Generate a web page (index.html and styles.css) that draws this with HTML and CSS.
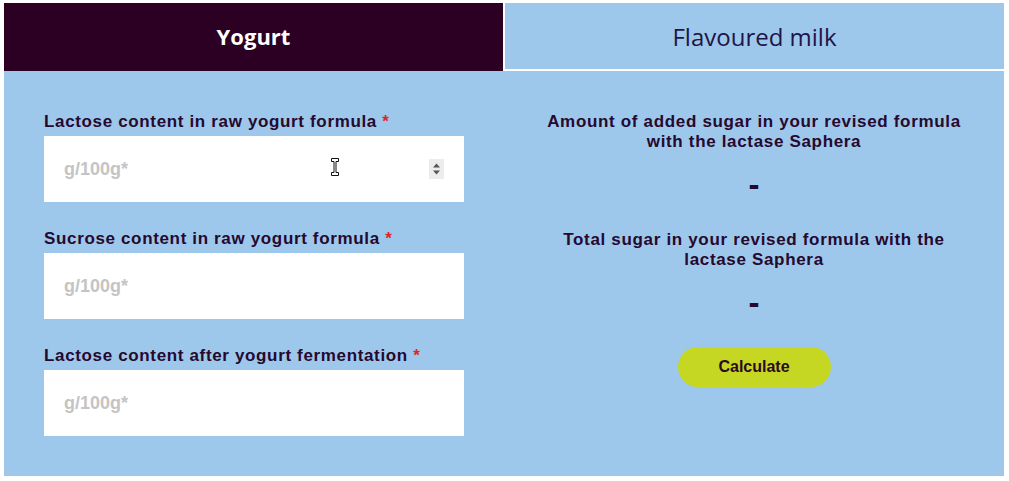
FILE: index.html
```html
<!DOCTYPE html>
<html lang="en">
<head>
<meta charset="utf-8">
<title>Sugar calculator</title>
<link rel="stylesheet" href="styles.css">
</head>
<body>
<div class="calc">
  <div class="tabs">
    <div class="tab tab-active">Yogurt</div>
    <div class="tab">Flavoured milk</div>
  </div>
  <div class="panel">
    <div class="col form">
      <div class="field">
        <label class="label">Lactose content in raw yogurt formula <span class="req">*</span></label>
        <div class="input-wrap">
          <input class="input" type="text" placeholder="g/100g*">
          <svg class="cursor" width="8" height="18" viewBox="0 0 8 18"><path d="M0.5 0.5H7.5V3.5H5V14.5H7.5V17.5H0.5V14.5H3V3.5H0.5Z" fill="#fff" stroke="#111" stroke-width="1"/></svg>
          <span class="spinner"><svg width="15" height="20" viewBox="0 0 15 20"><path d="M4 8.5h7L7.5 4.5z M4 11.5h7L7.5 15.5z" fill="#555"/></svg></span>
        </div>
      </div>
      <div class="field">
        <label class="label">Sucrose content in raw yogurt formula <span class="req">*</span></label>
        <div class="input-wrap"><input class="input" type="text" placeholder="g/100g*"></div>
      </div>
      <div class="field">
        <label class="label">Lactose content after yogurt fermentation <span class="req">*</span></label>
        <div class="input-wrap"><input class="input" type="text" placeholder="g/100g*"></div>
      </div>
    </div>
    <div class="col results">
      <div class="result">
        <h3 class="result-title">Amount of added sugar in your revised formula<br>with the lactase Saphera</h3>
        <div class="result-value">-</div>
      </div>
      <div class="result">
        <h3 class="result-title">Total sugar in your revised formula with the<br>lactase Saphera</h3>
        <div class="result-value">-</div>
      </div>
      <button class="btn" type="button">Calculate</button>
    </div>
  </div>
</div>
</body>
</html>
```
FILE: styles.css
```css
html, body {
  margin: 0;
  padding: 0;
  background: #ffffff;
}

.calc {
  width: 1000px;
  padding: 3px 5px 5px 4px;
}

.tabs {
  display: flex;
  gap: 2px;
  background: #ffffff;
}

.tab {
  flex: 1;
  height: 66px;
  display: flex;
  align-items: center;
  justify-content: center;
  background: #9ec7ec;
  color: #1e1545;
  font-family: "Open Sans", sans-serif;
  font-size: 24px;
  border-bottom: 2px solid #ffffff;
}

.tab-active {
  background: #2b0022;
  color: #ffffff;
  font-weight: 700;
  font-size: 22px;
  border-bottom-color: #2b0022;
}

.panel {
  display: flex;
  background: #9ec7ec;
  padding: 41px 0 40px;
}

.col {
  flex: 1;
  padding: 0 40px;
}

.field + .field {
  margin-top: 27px;
}

.label {
  display: block;
  font-family: "Liberation Sans", Arial, sans-serif;
  font-weight: 700;
  font-size: 17px;
  line-height: 20px;
  letter-spacing: 0.65px;
  color: #25092e;
  margin-bottom: 4px;
}

.req {
  color: #e02424;
}

.input-wrap {
  position: relative;
}

.input {
  display: block;
  box-sizing: border-box;
  width: 100%;
  height: 66px;
  border: none;
  outline: none;
  background: #ffffff;
  padding: 0 20px;
  font-family: "Liberation Sans", Arial, sans-serif;
  font-weight: 700;
  font-size: 18px;
  color: #333;
}

.input::placeholder {
  color: #c4c4c4;
}

.spinner {
  position: absolute;
  left: 385px;
  top: 23px;
  width: 15px;
  height: 20px;
  background: #ececec;
  display: flex;
}

.cursor {
  position: absolute;
  left: 287px;
  top: 22px;
}

.results {
  display: flex;
  flex-direction: column;
  align-items: center;
  text-align: center;
}

.result {
  margin-bottom: 30px;
}

.result + .btn {
  margin-top: -1px;
}

.result-title {
  margin: 0;
  font-family: "Liberation Sans", Arial, sans-serif;
  font-weight: 700;
  font-size: 17px;
  line-height: 20px;
  letter-spacing: 0.67px;
  color: #25092e;
}

.result-value {
  margin-top: 18px;
  font-family: "Liberation Sans", Arial, sans-serif;
  font-weight: 900;
  font-size: 33px;
  line-height: 30px;
  color: #25092e;
}

.btn {
  width: 153px;
  height: 40px;
  border: none;
  border-radius: 20px;
  background: #c5d623;
  color: #2b0a22;
  font-family: "Liberation Sans", Arial, sans-serif;
  font-weight: 700;
  font-size: 16px;
  cursor: pointer;
}
```
